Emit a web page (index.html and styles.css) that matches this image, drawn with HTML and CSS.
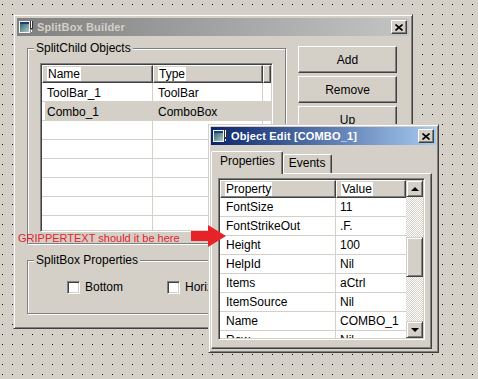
FILE: index.html
```html
<!DOCTYPE html>
<html lang="en">
<head>
    <meta charset="UTF-8">
    <title>SplitBox Builder</title>
    <link rel="stylesheet" href="styles.css">
</head>
<body>
    <!-- Main dialog -->
    <div class="window builder">
        <div class="titlebar inactive">
            <svg class="app-icon" width="14" height="12" viewBox="0 0 14 12">
                <rect x="0" y="0" width="11" height="12" fill="#f4f4f4"/>
                <rect x="1" y="1" width="9" height="2" fill="#1f3f74"/>
                <rect x="1" y="3" width="9" height="8" fill="url(#g1)"/>
                <rect x="11" y="0" width="3" height="8" fill="#303030"/>
                <rect x="12" y="0" width="1" height="7" fill="#fff"/>
                <rect x="12" y="9" width="1" height="2" fill="#fff"/>
                <defs>
                    <linearGradient id="g1" x1="0" x2="1" y1="0" y2="1">
                        <stop offset="0" stop-color="#2e6b6f"/>
                        <stop offset="1" stop-color="#b8c8cc"/>
                    </linearGradient>
                </defs>
            </svg>
            <span class="title">SplitBox Builder</span>
            <button class="close">
                <svg width="8" height="7" viewBox="0 0 8 7"><path d="M0.5 0.5 L7.5 6.5 M7.5 0.5 L0.5 6.5" stroke="#000" stroke-width="1.6"/></svg>
            </button>
        </div>

        <div class="builder-body">
            <div class="top-row">
                <div class="group objects">
                    <span class="group-label">SplitChild Objects</span>
                    <div class="listview sunken">
                        <div class="lv-header">
                            <div class="hcell col-name"><span class="hl">Name</span></div>
                            <div class="hcell col-type"><span class="hl">Type</span></div>
                            <div class="hcell col-fill"></div>
                        </div>
                        <div class="lv-row"><span class="col-name">ToolBar_1</span><span class="col-type">ToolBar</span><span class="col-fill"></span></div>
                        <div class="lv-row selected"><span class="col-name">Combo_1</span><span class="col-type">ComboBox</span><span class="col-fill"></span></div>
                        <div class="lv-row"><span class="col-name"></span><span class="col-type"></span><span class="col-fill"></span></div>
                        <div class="lv-row"><span class="col-name"></span><span class="col-type"></span><span class="col-fill"></span></div>
                        <div class="lv-row"><span class="col-name"></span><span class="col-type"></span><span class="col-fill"></span></div>
                        <div class="lv-row"><span class="col-name"></span><span class="col-type"></span><span class="col-fill"></span></div>
                        <div class="lv-row"><span class="col-name"></span><span class="col-type"></span><span class="col-fill"></span></div>
                        <div class="lv-row"><span class="col-name"></span><span class="col-type"></span><span class="col-fill"></span></div>
                    </div>
                </div>

                <div class="buttons">
                    <button class="btn">Add</button>
                    <button class="btn">Remove</button>
                    <button class="btn">Up</button>
                </div>
            </div>

            <div class="group props">
                <span class="group-label">SplitBox Properties</span>
                <div class="checks">
                    <label class="check-item"><span class="check"></span>Bottom</label>
                    <label class="check-item"><span class="check"></span>Horizontal</label>
                </div>
            </div>
        </div>
    </div>

    <!-- Property editor -->
    <div class="window editor">
        <div class="titlebar active">
            <svg class="app-icon" width="14" height="12" viewBox="0 0 14 12">
                <rect x="0" y="0" width="11" height="12" fill="#f4f4f4"/>
                <rect x="1" y="1" width="9" height="2" fill="#1f3f74"/>
                <rect x="1" y="3" width="9" height="8" fill="url(#g2)"/>
                <rect x="11" y="0" width="3" height="8" fill="#303030"/>
                <rect x="12" y="0" width="1" height="7" fill="#fff"/>
                <rect x="12" y="9" width="1" height="2" fill="#fff"/>
                <defs>
                    <linearGradient id="g2" x1="0" x2="1" y1="0" y2="1">
                        <stop offset="0" stop-color="#2e6b6f"/>
                        <stop offset="1" stop-color="#b8c8cc"/>
                    </linearGradient>
                </defs>
            </svg>
            <span class="title">Object Edit [COMBO_1]</span>
            <button class="close">
                <svg width="8" height="7" viewBox="0 0 8 7"><path d="M0.5 0.5 L7.5 6.5 M7.5 0.5 L0.5 6.5" stroke="#000" stroke-width="1.6"/></svg>
            </button>
        </div>

        <div class="tabs">
            <div class="tab selected">Properties</div>
            <div class="tab">Events</div>
        </div>

        <div class="tab-panel">
            <div class="propgrid sunken">
                <div class="pg-table">
                    <div class="pg-header">
                        <div class="hcell pcol-name"><span class="hl">Property</span></div>
                        <div class="hcell pcol-value"><span class="hl">Value</span></div>
                    </div>
                    <div class="pg-row"><span class="pcol-name">FontSize</span><span class="pcol-value">11</span></div>
                    <div class="pg-row"><span class="pcol-name">FontStrikeOut</span><span class="pcol-value">.F.</span></div>
                    <div class="pg-row"><span class="pcol-name">Height</span><span class="pcol-value">100</span></div>
                    <div class="pg-row"><span class="pcol-name">HelpId</span><span class="pcol-value">Nil</span></div>
                    <div class="pg-row"><span class="pcol-name">Items</span><span class="pcol-value">aCtrl</span></div>
                    <div class="pg-row"><span class="pcol-name">ItemSource</span><span class="pcol-value">Nil</span></div>
                    <div class="pg-row"><span class="pcol-name">Name</span><span class="pcol-value">COMBO_1</span></div>
                    <div class="pg-row"><span class="pcol-name">Row</span><span class="pcol-value">Nil</span></div>
                </div>
                <div class="scrollbar">
                    <div class="sb-btn"><span class="tri up"></span></div>
                    <div class="sb-track">
                        <div class="sb-thumb"></div>
                    </div>
                    <div class="sb-btn"><span class="tri down"></span></div>
                </div>
            </div>
        </div>
    </div>

    <!-- Annotation -->
    <div class="note">GRIPPERTEXT should it be here</div>
    <svg class="note-arrow" width="40" height="26" viewBox="0 0 40 26">
        <polygon points="1,7 18,7 18,1 36,12 18,23 18,17 1,17" fill="#e52329"/>
    </svg>
</body>
</html>
```

FILE: styles.css
```css
* {
    margin: 0;
    padding: 0;
    box-sizing: border-box;
}

html, body {
    width: 478px;
    height: 379px;
    overflow: hidden;
}

body {
    font-family: "Liberation Sans", Arial, sans-serif;
    font-size: 12px;
    color: #000;
    position: relative;
    background-color: #d4d0c8;
    background-image:
        linear-gradient(90deg, transparent 1px, #d4d0c8 1px),
        linear-gradient(180deg, #000 1px, #d4d0c8 1px);
    background-size: 10px 10px;
    background-position: 2px 4px;
}

button {
    font-family: inherit;
    font-size: 12px;
    color: #000;
}

/* Windows */
.window {
    position: absolute;
    background: #d4d0c8;
    border: 1px solid;
    border-color: #d4d0c8 #404040 #404040 #d4d0c8;
    box-shadow: inset 1px 1px #fff, inset -1px -1px #808080;
}

.builder {
    left: 13px;
    top: 14px;
    width: 400px;
    height: 315px;
    padding: 3px;
}

.editor {
    left: 208px;
    top: 124px;
    width: 231px;
    height: 229px;
    padding: 2px;
}

.titlebar {
    display: flex;
    align-items: center;
    height: 18px;
    padding: 0 2px;
    font-size: 11px;
    font-weight: bold;
    letter-spacing: 0.15px;
    white-space: nowrap;
}

.titlebar.inactive {
    background: linear-gradient(90deg, #808080, #c4c4c4);
    color: #d4d0c8;
}

.titlebar.active {
    background: linear-gradient(90deg, #0a246a, #a6caf0);
    color: #fff;
}

.app-icon {
    flex: none;
    margin-right: 4px;
}

.close {
    margin-left: auto;
    width: 16px;
    height: 14px;
    display: flex;
    align-items: center;
    justify-content: center;
    background: #d4d0c8;
    border: 1px solid;
    border-color: #fff #404040 #404040 #fff;
    box-shadow: inset -1px -1px #808080;
}

/* Shared 3D bits */
.sunken {
    border: 1px solid;
    border-color: #808080 #fff #fff #808080;
    box-shadow: inset 1px 1px #404040, inset -1px -1px #d4d0c8;
    background: #fff;
    padding: 1px;
}

.hcell {
    height: 18px;
    line-height: 16px;
    background: #d4d0c8;
    border: 1px solid;
    border-color: #fff #404040 #404040 #fff;
    box-shadow: inset -1px -1px #808080;
    padding-left: 4px;
    white-space: nowrap;
    overflow: hidden;
}

.hl {
    background: #fff;
    padding: 0 1px;
}

/* Builder layout */
.builder-body {
    padding: 12px 0 0 10px;
}

.top-row {
    display: flex;
    align-items: flex-start;
}

.group {
    position: relative;
    border: 1px solid #808080;
    box-shadow: inset 1px 1px #fff, 1px 1px #fff;
}

.group-label {
    position: absolute;
    top: -8px;
    left: 6px;
    padding: 0 2px;
    line-height: 14px;
    background: #d4d0c8;
    white-space: nowrap;
}

.objects {
    width: 259px;
    height: 196px;
    padding: 14px 0 0 12px;
}

.props {
    margin-top: 16px;
    width: 370px;
    height: 54px;
    padding: 19px 0 0 39px;
}

.buttons {
    margin: -2px 0 0 12px;
    display: flex;
    flex-direction: column;
    gap: 3px;
}

.btn {
    width: 99px;
    height: 27px;
    background: #d4d0c8;
    border: 1px solid;
    border-color: #fff #404040 #404040 #fff;
    box-shadow: inset -1px -1px #808080;
}

/* List view */
.listview {
    width: 233px;
    height: 169px;
    overflow: hidden;
}

.lv-header,
.lv-row {
    display: flex;
}

.lv-header .col-name { width: 111px; }
.lv-header .col-type { width: 110px; }
.lv-header .col-fill { flex: 1; }

.lv-row {
    height: 19px;
    line-height: 18px;
    padding-top: 1px;
    border-bottom: 1px solid #d4d0c8;
}

.lv-row span {
    height: 18px;
    padding-left: 5px;
    border-right: 1px solid #d4d0c8;
    margin-top: -1px;
    padding-top: 1px;
}

.lv-row .col-name { width: 111px; }
.lv-row .col-type { width: 110px; }
.lv-row .col-fill { flex: 1; border-right: none; }

.lv-row.selected {
    background: #d4d0c8;
    box-shadow: inset 3px 0 #fff;
}

/* Checkboxes */
.checks {
    display: flex;
}

.check-item {
    width: 100px;
    display: flex;
    align-items: center;
    gap: 5px;
    white-space: nowrap;
}

.check {
    width: 13px;
    height: 13px;
    background: #fff;
    border: 1px solid;
    border-color: #808080 #fff #fff #808080;
    box-shadow: inset 1px 1px #404040, inset -1px -1px #d4d0c8;
}

/* Editor tabs */
.tabs {
    display: flex;
    align-items: flex-end;
    padding: 5px 0 0 0;
    height: 28px;
}

.tab {
    height: 19px;
    padding: 1px 6px 0 5px;
    line-height: 14px;
    background: #d4d0c8;
    border: 1px solid;
    border-bottom: none;
    border-color: #fff #404040 #404040 #fff;
    box-shadow: inset -1px 0 #808080;
    border-radius: 2px 2px 0 0;
    white-space: nowrap;
}

.tab.selected {
    height: 23px;
    padding: 2px 7px 0 8px;
    margin-bottom: -1px;
    position: relative;
    z-index: 1;
}

.tab-panel {
    width: 221px;
    height: 176px;
    border: 1px solid;
    border-color: #fff #404040 #404040 #fff;
    box-shadow: inset -1px -1px #808080;
    padding: 4px 0 0 6px;
}

/* Property grid */
.propgrid {
    width: 207px;
    height: 162px;
    display: flex;
    overflow: hidden;
}

.pg-table {
    width: 186px;
    overflow: hidden;
}

.pg-header,
.pg-row {
    display: flex;
}

.pcol-name { width: 116px; flex: none; }
.pcol-value { width: 70px; flex: none; }

.pg-row {
    height: 19px;
    line-height: 18px;
    border-bottom: 1px solid #d4d0c8;
}

.pg-row span {
    padding-left: 6px;
    white-space: nowrap;
}

.pg-row .pcol-name {
    border-right: 1px solid #d4d0c8;
}

.pg-row .pcol-value {
    padding-left: 4px;
}

/* Scrollbar */
.scrollbar {
    width: 17px;
    display: flex;
    flex-direction: column;
}

.sb-btn,
.sb-thumb {
    height: 17px;
    flex: none;
    background: #d4d0c8;
    border: 1px solid;
    border-color: #d4d0c8 #404040 #404040 #d4d0c8;
    box-shadow: inset 1px 1px #fff, inset -1px -1px #808080;
    display: flex;
    align-items: center;
    justify-content: center;
}

.sb-track {
    flex: 1;
    padding-top: 40px;
    background-image: conic-gradient(#fff 25%, #d4d0c8 0 50%, #fff 0 75%, #d4d0c8 0);
    background-size: 2px 2px;
}

.sb-thumb {
    height: 40px;
}

.tri {
    width: 0;
    height: 0;
    border-left: 4px solid transparent;
    border-right: 4px solid transparent;
}

.tri.up {
    border-bottom: 4px solid #000;
}

.tri.down {
    border-top: 4px solid #000;
}

/* Annotation overlay */
.note {
    position: absolute;
    left: 18px;
    top: 232px;
    font-size: 11px;
    line-height: 13px;
    color: #e52329;
    white-space: nowrap;
}

.note-arrow {
    position: absolute;
    left: 190px;
    top: 224px;
}
```
